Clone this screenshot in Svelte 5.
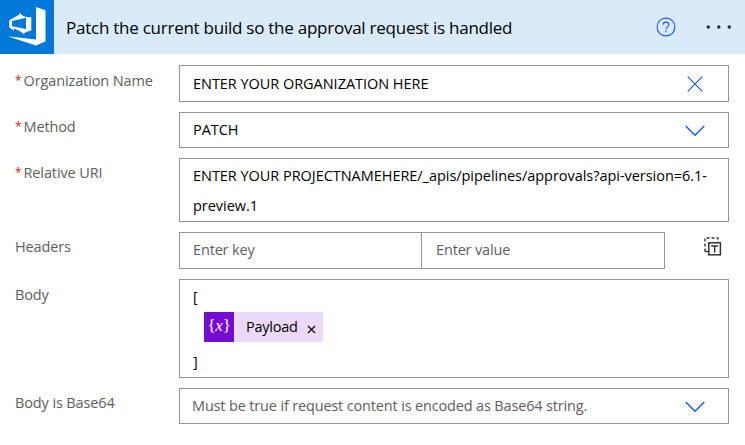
<script>
  const name = 'ENTER YOUR ORGANIZATION HERE';
</script>

{#snippet chevron()}
  <svg class="icon" width="20" height="12" viewBox="0 0 20 12"><path d="M.7 1 10 10.2 19.3 1" fill="none" stroke="#145cff" stroke-width="1.5" /></svg>
{/snippet}

<div class="card">
  <header>
    <div class="logo">
      <svg width="54" height="54" viewBox="0 0 54 54">
        <path fill="#fff" d="M36 7 45.5 10.3V41.5L36 45.5 7.5 36.3 36 39.5Z" />
        <path fill="#fff" fill-rule="evenodd" d="M9.3 20.3 19 14.8V12.7L24 16.4 31.3 17.4V30.5L26 32 23.5 34 20.5 31.5 14 28.5V30.5L9.3 27.5ZM12 21V26.2L26 28.9V17.8Z" />
      </svg>
    </div>
    <h1>Patch the current build so the approval request is handled</h1>
    <svg class="help" width="20" height="20" viewBox="0 0 20 20" fill="none" stroke="#145cff">
      <circle cx="10" cy="10" r="8.9" stroke-width="1.1" />
      <path d="M7.2 7.8C7.2 6.2 8.4 5.1 10 5.1s2.8 1 2.8 2.6c0 2.2-2.8 2.2-2.8 4.7" stroke-width="1.1" />
      <path d="M10 13.8v1.4" stroke-width="1.2" />
    </svg>
    <svg class="more" width="26" height="4" viewBox="0 0 26 4" fill="#303030"><circle cx="2.3" cy="2" r="1.8" /><circle cx="12.8" cy="2" r="1.8" /><circle cx="23.3" cy="2" r="1.8" /></svg>
  </header>

  <div class="row r1">
    <div class="label"><i>*</i><span>Organization Name</span></div>
    <div class="field"><span>{name}</span>
      <svg class="icon clear" width="16" height="16" viewBox="0 0 16 16"><path d="M.7.7 15.3 15.3M15.3.7.7 15.3" stroke="#145cff" stroke-width="1.2" /></svg>
    </div>
  </div>
  <div class="row r2">
    <div class="label"><i>*</i><span>Method</span></div>
    <div class="field"><span class="patch">PATCH</span>{@render chevron()}</div>
  </div>
  <div class="row r3">
    <div class="label"><i>*</i><span>Relative URI</span></div>
    <div class="field uri"><span>ENTER YOUR PROJECTNAMEHERE/_apis/pipelines/approvals?api-version=6.1-</span><span>preview.1</span></div>
  </div>
  <div class="row r4">
    <div class="label"><span>Headers</span></div>
    <div class="field hint key"><span>Enter key</span></div>
    <div class="field hint value"><span>Enter value</span></div>
    <svg class="switch" width="18" height="19" viewBox="0 0 18 19" fill="none" stroke="#333">
      <path d="M1 14.5V1H14V5" stroke-width="1.4" stroke-dasharray="3 2" /><path d="M1 14.5H4" stroke-width="1.4" />
      <rect x="4.8" y="5.8" width="11.6" height="12" stroke-width="1.5" />
      <path d="M7.2 9h7M10.7 9v6.5" stroke-width="1.5" />
    </svg>
  </div>
  <div class="row r5">
    <div class="label"><span>Body</span></div>
    <div class="field body">
      <span>[</span>
      <div class="token"><b>{'{'}<em>x</em>{'}'}</b><span>Payload</span>
        <svg width="9" height="9" viewBox="0 0 9 9"><path d="M1 1 8 8M8 1 1 8" stroke="#111" stroke-width="1.4" /></svg>
      </div>
      <span class="close">]</span>
    </div>
  </div>
  <div class="row r6">
    <div class="label"><span>Body is Base64</span></div>
    <div class="field hint b64"><span class="must">Must be true if request content is encoded as Base64 string.</span>{@render chevron()}</div>
  </div>
</div>

<style>
  :global(body) { background: #fff; }
  .card { width: 745px; height: 445px; box-sizing: border-box; overflow: hidden; background: #fff; font-family: "Open Sans", "Noto Sans", sans-serif; font-size: 14.5px; font-weight: 400; letter-spacing: -.04px; color: #000; white-space: nowrap; }
  header { height: 54px; display: flex; align-items: center; background: #d9eaf8; margin-bottom: 11px; }
  .logo { width: 54px; height: 54px; background: #0078d7; margin-right: 12px; }
  .logo svg { display: block; }
  h1 { margin: 0; width: 589.5px; font-size: 17px; font-weight: 400; letter-spacing: -.25px; line-height: 55px; }
  .help { flex: none; margin-top: -1px; }
  .more { flex: none; margin-left: 30.5px; }
  .row { display: flex; margin-bottom: 10px; }
  .label { width: 164px; padding-left: 15px; box-sizing: content-box; line-height: 30px; height: 30px; color: #605e5c; display: flex; letter-spacing: -.12px; }
  .label i { width: 8.5px; font-style: normal; font-size: 12px; color: #e00b1c; }
  .field { width: 550px; box-sizing: border-box; border: 1px solid #969696; height: 100%; padding: 0 23px 0 13px; display: flex; align-items: center; justify-content: space-between; }
  .clear { margin-right: 2px; }
  .r1 { height: 37px; }
  .r1 .label, .r5 .label { line-height: 31px; }
  .r2 { height: 36px; }
  .r3 { height: 64px; }
  .r4 { height: 37px; }
  .r5 { height: 99px; }
  .r6 { height: 36px; }
  .r2 .icon, .r6 .icon { margin-top: 2px; }
  .r4 .field span, .patch { margin-top: -2px; }
  .must { margin-top: -1px; }
  .uri { flex-direction: column; align-items: flex-start; justify-content: flex-start; line-height: 30px; padding-top: 2px; }
  .hint { color: #605e5c; letter-spacing: -.16px; }
  .key { width: 243px; }
  .value { width: 244px; margin-left: -1px; padding-left: 14px; }
  .switch { margin: 5px 0 0 39px; }
  .body { flex-direction: column; align-items: flex-start; justify-content: flex-start; line-height: 30px; padding-top: 2px; }
  .close { margin-top: 5px; }
  .token { display: flex; align-items: center; width: 119px; height: 30px; margin-left: 11px; background: #ebdaf7; letter-spacing: -.25px; }
  .token b { width: 30px; height: 30px; text-align: center; color: #fff; background: #770bd6; font: 400 17px/28px "Liberation Serif", serif; margin-right: 12px; }
  .token span { width: 61px; line-height: 32px; }
  .token svg { margin-top: 4px; }
  .b64 { padding-left: 12px; }
</style>
